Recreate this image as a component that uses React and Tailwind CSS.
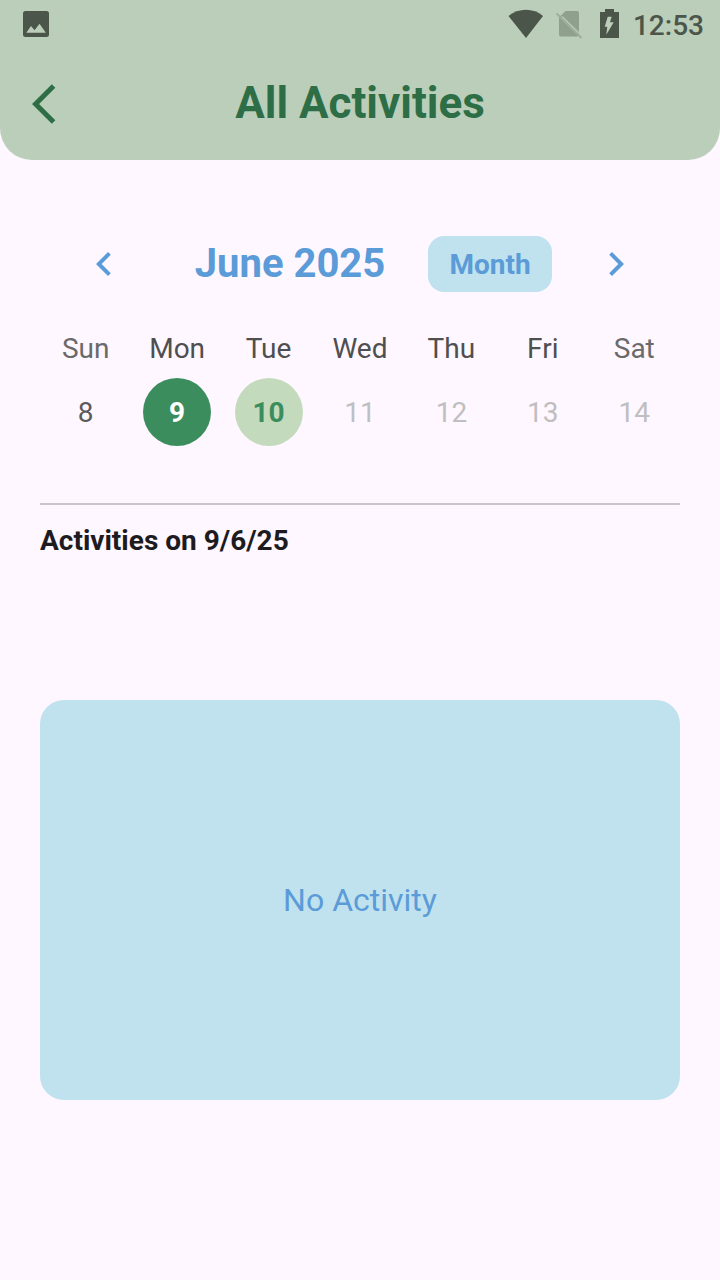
const chevronLeft = 'M15.41 7.41L14 6l-6 6 6 6 1.41-1.41L10.83 12z';
const chevronRight = 'M10 6L8.59 7.41 13.17 12l-4.58 4.59L10 18l6-6z';

const days = [
  { name: 'Sun', date: 8, weekend: true },
  { name: 'Mon', date: 9, state: 'selected' },
  { name: 'Tue', date: 10, state: 'today' },
  { name: 'Wed', date: 11, state: 'disabled' },
  { name: 'Thu', date: 12, state: 'disabled' },
  { name: 'Fri', date: 13, state: 'disabled' },
  { name: 'Sat', date: 14, state: 'disabled', weekend: true },
];

const dateStyles = {
  selected: 'bg-[#3c8d5d] font-bold text-white',
  today: 'bg-[#c4dabd] font-bold text-[#3c8d5d]',
  disabled: 'text-[#bfbfbf]',
  normal: 'text-[#5a5a5a]',
};

function StatusBar() {
  return (
    <div className="flex h-12 items-center justify-between pr-4 pl-5 text-[#4b5549]">
      <svg viewBox="0 0 32 32" className="size-8" fill="currentColor" aria-hidden="true">
        <path
          fillRule="evenodd"
          d="M5.500 3h21a2.500 2.500 0 0 1 2.500 2.500v21a2.500 2.500 0 0 1-2.500 2.500h-21A2.500 2.500 0 0 1 3 26.500v-21A2.500 2.500 0 0 1 5.500 3zM6.300 24.800h19.500l-6.300-9-5 6.400-3.500-4.200z"
        />
      </svg>
      <div className="flex items-center">
        <svg viewBox="0 0 36 30" className="mr-3 h-[30px] w-9" fill="currentColor" aria-hidden="true">
          <path d="M1.500 7C11.500-1.200 26.500-1.200 36 7L19 29z" />
        </svg>
        <svg viewBox="0 0 28 30" className="mr-4 h-[30px] w-7" aria-hidden="true">
          <path d="M10.500 2H22a2 2 0 0 1 2 2v21.500a2 2 0 0 1-2 2H6a2 2 0 0 1-2-2V8.500z" fill="#8fa08d" />
          <path d="M1.500 4.500l25 24.500" stroke="#9dae9b" strokeWidth="2" />
          <path d="M7 7.500l17 16.600" stroke="#b5c8b4" strokeWidth="1.500" />
        </svg>
        <svg viewBox="0 0 20 30" className="mr-3.5 h-[30px] w-5" fill="currentColor" aria-hidden="true">
          <path
            fillRule="evenodd"
            d="M6 0h9v3h5v26H1V3h5zM8.700 7.700L5.700 17.700h2.600l-1 8 7.400-12.400H11l1.700-5.600z"
          />
        </svg>
        <span className="pt-1 text-[28px] leading-8 font-medium">12:53</span>
      </div>
    </div>
  );
}

function MonthArrow({ label, path }) {
  return (
    <button type="button" aria-label={label} className="flex h-14 w-32 items-center justify-center">
      <svg viewBox="0 0 24 24" className="size-12" fill="currentColor" aria-hidden="true">
        <path d={path} />
      </svg>
    </button>
  );
}

export default function App() {
  return (
    <div className="min-h-screen bg-[#fef7ff] font-['Roboto',sans-serif]">
      <header className="rounded-b-[32px] bg-[#bbceba]">
        <StatusBar />
        <div className="grid h-28 grid-cols-[48px_1fr_48px] items-center px-8 text-[#2d6e46]">
          <button type="button" aria-label="Back" className="size-12">
            <svg viewBox="0 0 24 24" className="size-12" fill="currentColor" aria-hidden="true">
              <path d="M11.670 3.870L9.900 2.100 0 12l9.900 9.900 1.770-1.770L3.540 12z" />
            </svg>
          </button>
          <h1 className="pb-0.5 text-center text-[44px] leading-12 font-bold">All Activities</h1>
        </div>
      </header>

      <main className="px-10 pt-19">
        <section aria-label="Calendar">
          <div className="flex items-center text-[#5b9bd8]">
            <MonthArrow label="Previous week" path={chevronLeft} />
            <h2 className="flex-1 text-center text-[40px] leading-12 font-bold">June 2025</h2>
            <button
              type="button"
              className="ml-4 h-14 w-31 rounded-2xl bg-[#c0e2ee] pt-0.5 text-[28px] leading-8 font-bold"
            >
              Month
            </button>
            <MonthArrow label="Next week" path={chevronRight} />
          </div>

          <table className="mt-10 w-full table-fixed text-center text-[28px] leading-8">
            <thead>
              <tr>
                {days.map((day) => (
                  <th
                    key={day.name}
                    scope="col"
                    className={`pt-px font-normal ${day.weekend ? 'text-[#6a6a6a]' : 'text-[#4f4f4f]'}`}
                  >
                    {day.name}
                  </th>
                ))}
              </tr>
            </thead>
            <tbody>
              <tr>
                {days.map((day) => (
                  <td key={day.date} className="pt-[13px]">
                    <button
                      type="button"
                      disabled={day.state === 'disabled'}
                      className={`mx-auto flex size-[68px] items-center justify-center rounded-full pt-0.5 ${dateStyles[day.state || 'normal']}`}
                    >
                      {day.date}
                    </button>
                  </td>
                ))}
              </tr>
            </tbody>
          </table>
        </section>

        <section className="mt-[57px] border-t-2 border-[#cac4d0] pt-5">
          <h3 className="text-[28px] leading-8 font-bold text-[#1d1b20]">Activities on 9/6/25</h3>
          <div className="mt-[143px] flex min-h-100 items-center justify-center rounded-3xl bg-[#c0e2ee]">
            <p className="text-[32px] leading-10 text-[#5b9bd8]">No Activity</p>
          </div>
        </section>
      </main>
    </div>
  );
}
